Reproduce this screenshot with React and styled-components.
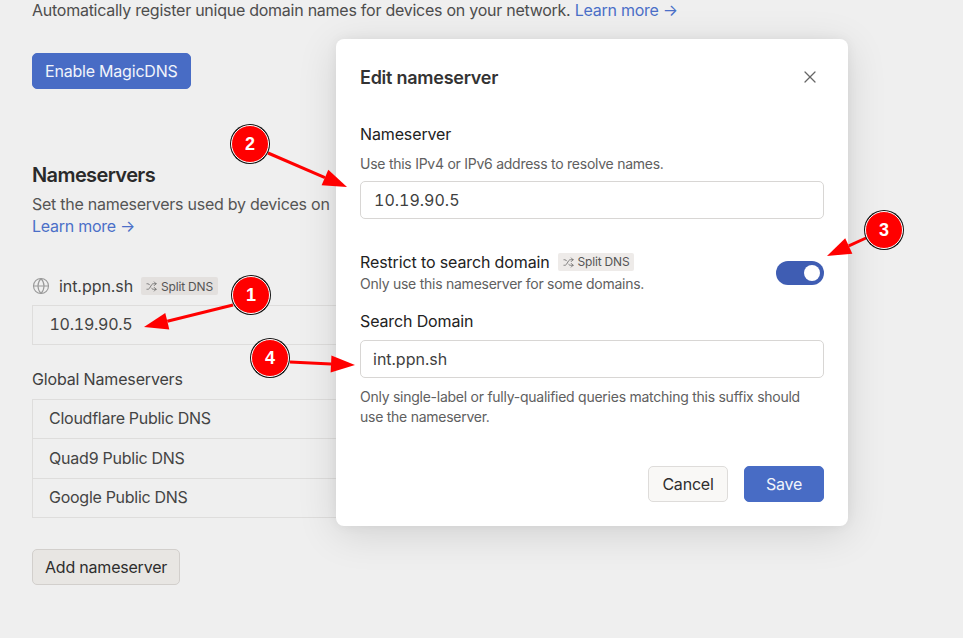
import React from "react";
import styled, { createGlobalStyle } from "styled-components";
import { Globe, Shuffle, X } from "lucide-react";

const GlobalStyle = createGlobalStyle`
  html, body {
    margin: 0;
    height: 100%;
    overflow: hidden;
    background: #efefef;
    font-family: Inter, "Liberation Sans", sans-serif;
    letter-spacing: -0.016em;
    color: #3a3a3a;
  }
  * { box-sizing: border-box; }
`;

const Page = styled.div`
  position: relative;
  width: 963px;
  height: 638px;
  padding: 0 32px;
  overflow: hidden;
  background: #efefef;
`;

const Intro = styled.p`
  margin: 0 0 33px;
  font-size: 16px;
  line-height: 20px;
  color: #4d4d4d;
  white-space: nowrap;
`;

const Link = styled.a`
  color: #4b6fc8;
  display: ${(p) => (p.$block ? "block" : "inline")};
`;

const Button = styled.button`
  width: ${(p) => (p.$width ? `${p.$width}px` : "auto")};
  height: 36px;
  padding: 0 12px;
  border-radius: 5px;
  font: 400 16px Inter, sans-serif;
  letter-spacing: -0.013em;
  border: 1px solid ${(p) => (p.$primary ? "#486cc5" : p.$light ? "#dedcda" : "#d2cfcc")};
  background: ${(p) => (p.$primary ? "#486cc5" : p.$light ? "#f9f8f6" : "#e8e6e3")};
  color: ${(p) => (p.$primary ? "#f1f4fb" : "#2e2e2e")};
`;

const Heading = styled.h2`
  margin: 73px 0 5px;
  font-size: 20px;
  line-height: 26px;
  font-weight: 600;
  letter-spacing: -0.03em;
  color: #2a2a2a;
`;

const Description = styled.div`
  margin: 0 0 37px;
  font-size: 16px;
  line-height: 22px;
  color: #555;
  white-space: nowrap;
`;

const DomainRow = styled.div`
  display: flex;
  align-items: center;
  height: 24px;
  margin-bottom: 7px;
  font-size: 16px;
  letter-spacing: -0.004em;
  color: #404040;
`;

const GlobeIcon = styled(Globe)`
  width: 18px;
  height: 18px;
  margin-right: 9px;
  color: #9a9a9a;
`;

const Tag = styled.span`
  display: inline-flex;
  align-items: center;
  gap: 4px;
  height: 18px;
  padding: 0 5px;
  margin-left: 8px;
  border-radius: 2px;
  font-size: 12px;
  font-weight: 400;
  letter-spacing: -0.016em;
  color: #555;
  background: ${(p) => (p.$light ? "#eeebe9" : "#e3e0de")};
`;

const List = styled.div`
  width: 400px;
  margin-bottom: ${(p) => p.$mb}px;
  border: 1px solid #dedddc;
`;

const ListRow = styled.div`
  height: ${(p) => p.$h}px;
  padding: 0 0 2px ${(p) => p.$pl || 16}px;
  display: flex;
  align-items: center;
  font-size: 16px;
  font-variant-numeric: tabular-nums;
  color: #444;
  border-top: ${(p) => (p.$first ? "none" : "1px solid #dedddc")};
`;

const SubHeading = styled.div`
  height: 20px;
  margin-bottom: 10px;
  font-size: 16px;
  letter-spacing: -0.01em;
  line-height: 20px;
  color: #404040;
`;

const Modal = styled.div`
  position: absolute;
  left: 336px;
  top: 39px;
  width: 512px;
  height: 487px;
  padding: 24px;
  border-radius: 8px;
  background: #fff;
  box-shadow: 0 0 12px rgba(0, 0, 0, 0.05), 0 8px 40px rgba(0, 0, 0, 0.12);
`;

const ModalHeader = styled.div`
  display: flex;
  justify-content: space-between;
  align-items: center;
  height: 28px;
  margin-bottom: 33px;
`;

const ModalTitle = styled.h3`
  margin: 0;
  font-size: 18px;
  font-weight: 600;
  color: #333;
`;

const CloseIcon = styled(X)`
  width: 20px;
  height: 20px;
  margin-right: 4px;
  color: #666;
`;

const Label = styled.div`
  font-size: 16px;
  line-height: 20px;
  font-weight: 400;
  letter-spacing: -0.008em;
  color: #222;
  display: flex;
  align-items: center;
`;

const Help = styled.div`
  font-size: 14px;
  line-height: 20px;
  margin-top: ${(p) => p.$mt || 0}px;
  margin-bottom: ${(p) => p.$mb || 0}px;
  color: #606060;
`;

const Input = styled.div`
  height: 38px;
  padding-left: ${(p) => p.$pl}px;
  display: flex;
  align-items: center;
  border: 1px solid #d8d6d4;
  border-radius: 5px;
  font-size: 16px;
  font-variant-numeric: tabular-nums;
  letter-spacing: 0;
  color: #3f3f3f;
  margin-bottom: ${(p) => p.$mb}px;
  margin-top: ${(p) => p.$mt || 0}px;
`;

const ToggleRow = styled.div`
  display: flex;
  justify-content: space-between;
  align-items: center;
  margin-bottom: 17px;
`;

const Toggle = styled.div`
  width: 48px;
  height: 24px;
  border-radius: 12px;
  background: #3f5db3;
  display: flex;
  align-items: center;
  justify-content: flex-end;
  padding-right: 4px;
`;

const Knob = styled.div`
  width: 16px;
  height: 16px;
  border-radius: 50%;
  background: #fff;
`;

const Footer = styled.div`
  display: flex;
  justify-content: flex-end;
  gap: 16px;
  margin-top: 39px;
`;

const ArrowLayer = styled.svg`
  position: absolute;
  inset: 0;
  width: 963px;
  height: 638px;
  pointer-events: none;
`;

const Badge = styled.div`
  position: absolute;
  left: ${(p) => p.$x - 19}px;
  top: ${(p) => p.$y - 19}px;
  width: 38px;
  height: 38px;
  display: flex;
  align-items: center;
  justify-content: center;
  border-radius: 50%;
  background: #ff0000;
  border: 1.5px solid #fff;
  box-shadow: 0 0 0 1px #111;
  font: 700 18px "Liberation Sans", sans-serif;
  color: #fff;
`;

const arrows = [
  { x1: 233, y1: 305, x2: 144, y2: 327 },
  { x1: 268, y1: 153, x2: 347, y2: 187 },
  { x1: 866, y1: 238, x2: 827, y2: 256 },
  { x1: 290, y1: 362, x2: 355, y2: 365 },
];

const badges = [
  { n: 1, x: 251, y: 295 },
  { n: 2, x: 250, y: 144 },
  { n: 3, x: 884, y: 230 },
  { n: 4, x: 270, y: 358 },
];

function Arrow({ x1, y1, x2, y2 }) {
  const a = Math.atan2(y2 - y1, x2 - x1);
  const len = 24;
  const w = 8.5;
  const bx = x2 - len * Math.cos(a);
  const by = y2 - len * Math.sin(a);
  const nx = -Math.sin(a) * w;
  const ny = Math.cos(a) * w;
  return (
    <g>
      <line x1={x1} y1={y1} x2={bx} y2={by} stroke="#f00" strokeWidth="3" />
      <polygon points={`${x2},${y2} ${bx + nx},${by + ny} ${bx - nx},${by - ny}`} fill="#f00" />
    </g>
  );
}

export default function App() {
  return (
    <Page>
      <GlobalStyle />
      <Intro>
        Automatically register unique domain names for devices on your network.{" "}
        <Link>Learn more →</Link>
      </Intro>
      <Button $primary>Enable MagicDNS</Button>

      <Heading>Nameservers</Heading>
      <Description>
        Set the nameservers used by devices on
        <Link $block>Learn more →</Link>
      </Description>

      <DomainRow>
        <GlobeIcon strokeWidth={1.5} />
        int.ppn.sh
        <Tag>
          <Shuffle size={11} strokeWidth={1.5} />
          Split DNS
        </Tag>
      </DomainRow>
      <List $mb={24}>
        <ListRow $first $h={38} $pl={16.5}>10.19.90.5</ListRow>
      </List>

      <SubHeading>Global Nameservers</SubHeading>
      <List $mb={31}>
        <ListRow $first $h={38}>Cloudflare Public DNS</ListRow>
        <ListRow $h={40}>Quad9 Public DNS</ListRow>
        <ListRow $h={39}>Google Public DNS</ListRow>
      </List>
      <Button>Add nameserver</Button>

      <Modal>
        <ModalHeader>
          <ModalTitle>Edit nameserver</ModalTitle>
          <CloseIcon strokeWidth={1.5} />
        </ModalHeader>
        <Label>Nameserver</Label>
        <Help $mt={10} $mb={7}>Use this IPv4 or IPv6 address to resolve names.</Help>
        <Input $pl={13} $mb={33}>10.19.90.5</Input>
        <ToggleRow>
          <div>
            <Label>
              Restrict to search domain
              <Tag $light>
                <Shuffle size={11} strokeWidth={1.5} />
                Split DNS
              </Tag>
            </Label>
            <Help $mt={2}>Only use this nameserver for some domains.</Help>
          </div>
          <Toggle>
            <Knob />
          </Toggle>
        </ToggleRow>
        <Label>Search Domain</Label>
        <Input $pl={12} $mt={9} $mb={9}>int.ppn.sh</Input>
        <Help>
          Only single-label or fully-qualified queries matching this suffix should
          use the nameserver.
        </Help>
        <Footer>
          <Button $light $width={80}>Cancel</Button>
          <Button $primary $width={80}>Save</Button>
        </Footer>
      </Modal>

      <ArrowLayer viewBox="0 0 963 638">
        {arrows.map((a, i) => (
          <Arrow key={i} {...a} />
        ))}
      </ArrowLayer>
      {badges.map((b) => (
        <Badge key={b.n} $x={b.x} $y={b.y}>{b.n}</Badge>
      ))}
    </Page>
  );
}
